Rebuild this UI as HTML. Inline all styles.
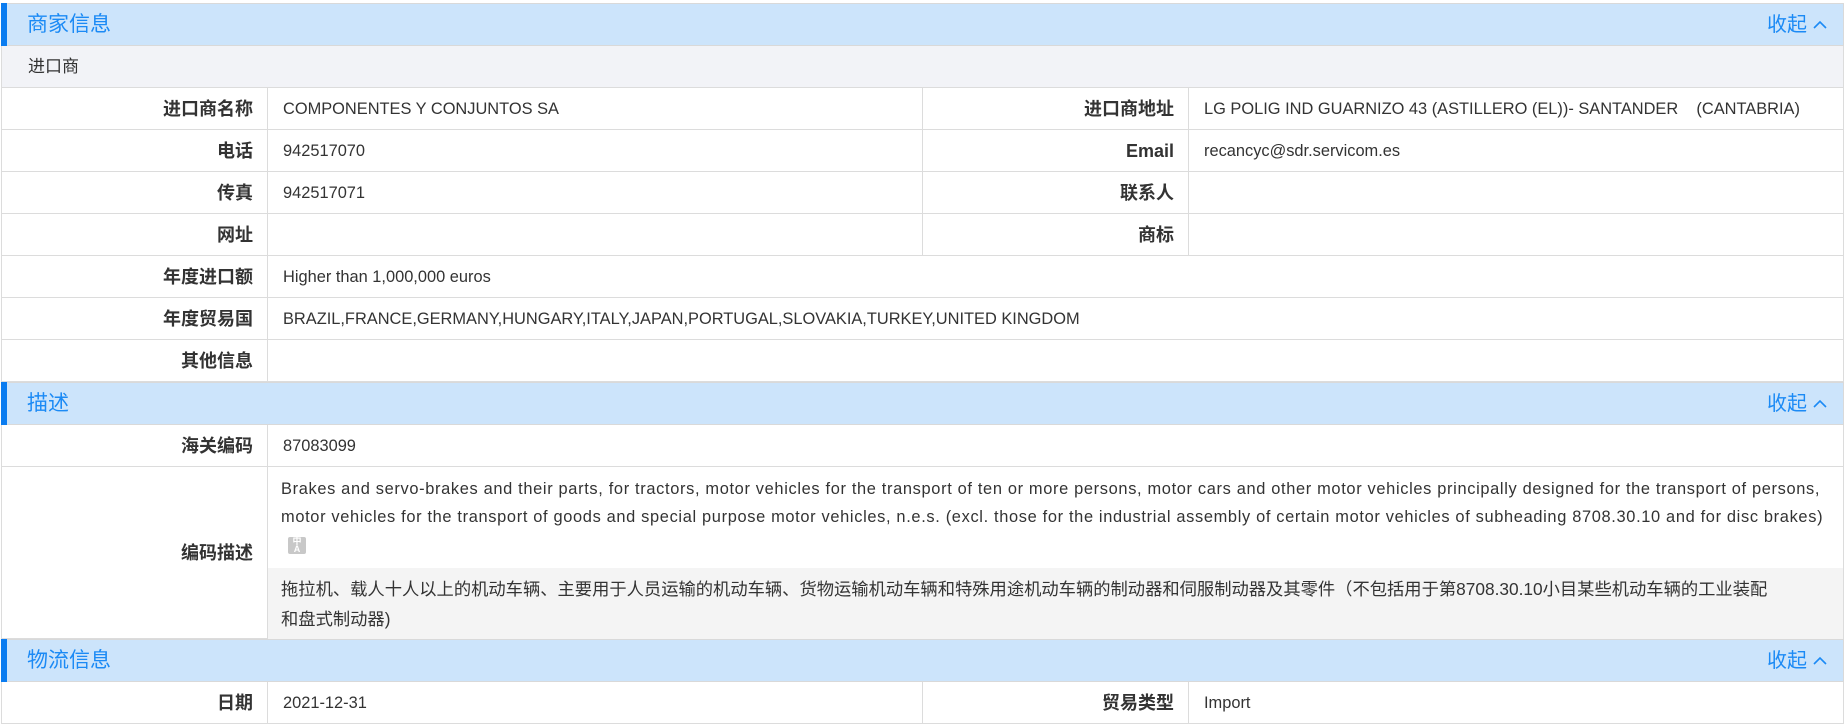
<!DOCTYPE html>
<html><head><meta charset="utf-8"><style>
*{box-sizing:border-box;margin:0;padding:0}
body{width:1846px;height:726px;background:#fff;font-family:"Liberation Sans","Noto Sans CJK SC",sans-serif;color:#333;font-size:16.4px;line-height:20px;overflow:hidden}
.wrap{position:absolute;left:1px;top:3px;width:1843px}
.hd{height:43px;background:#cce4fb;border:1px solid #d9d9d9;border-left:none;position:relative;display:flex;align-items:center;justify-content:space-between;padding:0 16px 0 26px;color:#1b8af5;font-size:21px;line-height:24px}
.hd .c{font-size:20px}
.hd:before{content:"";position:absolute;left:0;top:-1px;bottom:-1px;width:6px;background:#0a7cf0}
.hd .c{display:flex;align-items:center;gap:6px}
.sub{height:42px;background:#f2f3f7;border:1px solid #dcdcdc;border-top:none;display:flex;align-items:center;padding-left:26px;font-size:17px}
.row{display:flex;height:42px;border:1px solid #dcdcdc;border-top:none}
.l{width:266px;text-align:right;padding-right:14px;font-weight:bold;font-size:18px;display:flex;align-items:center;justify-content:flex-end;border-right:1px solid #dcdcdc;flex:none}
.v{display:flex;align-items:center;padding-left:15px;flex:none}
.v1{width:655px;border-right:1px solid #dcdcdc}
.l2{width:266px}
.vf{flex:1;display:flex;align-items:center;padding-left:15px}
.desc{display:flex;height:172px;border:1px solid #dcdcdc;border-top:none}
.desc .l{height:100%}
.dv{flex:1}
.en{padding:8px 0 0 13px;line-height:28px;white-space:nowrap;letter-spacing:0.66px}
.ic{display:inline-block;width:18px;height:17px;background:#c8c8c8;border-radius:2px;margin:6px 0 0 7px;font-size:9px;color:#fff;line-height:8px;text-align:center;font-weight:bold;vertical-align:top;letter-spacing:0}
.cn{background:#f4f4f4;margin-top:9px;height:74px;padding:6px 0 0 13px;line-height:30px;font-size:17.3px;white-space:nowrap}
</style></head><body><div class="wrap">
<div class="hd"><span>商家信息</span><span class="c">收起 <svg width="14" height="10" viewBox="0 0 14 10"><path d="M1 8 L7 2 L13 8" stroke="#1b8af5" stroke-width="1.6" fill="none"/></svg></span></div>
<div class="sub">进口商</div>
<div class="row"><div class="l">进口商名称</div><div class="v v1">COMPONENTES Y CONJUNTOS SA</div><div class="l l2">进口商地址</div><div class="vf">LG POLIG IND GUARNIZO 43 (ASTILLERO (EL))- SANTANDER &nbsp;&nbsp;&nbsp;(CANTABRIA)</div></div>
<div class="row"><div class="l">电话</div><div class="v v1">942517070</div><div class="l l2">Email</div><div class="vf">recancyc@sdr.servicom.es</div></div>
<div class="row"><div class="l">传真</div><div class="v v1">942517071</div><div class="l l2">联系人</div><div class="vf"></div></div>
<div class="row"><div class="l">网址</div><div class="v v1"></div><div class="l l2">商标</div><div class="vf"></div></div>
<div class="row"><div class="l">年度进口额</div><div class="vf">Higher than 1,000,000 euros</div></div>
<div class="row"><div class="l">年度贸易国</div><div class="vf">BRAZIL,FRANCE,GERMANY,HUNGARY,ITALY,JAPAN,PORTUGAL,SLOVAKIA,TURKEY,UNITED KINGDOM</div></div>
<div class="row"><div class="l">其他信息</div><div class="vf"></div></div>
<div class="hd"><span>描述</span><span class="c">收起 <svg width="14" height="10" viewBox="0 0 14 10"><path d="M1 8 L7 2 L13 8" stroke="#1b8af5" stroke-width="1.6" fill="none"/></svg></span></div>
<div class="row"><div class="l">海关编码</div><div class="vf">87083099</div></div>
<div class="desc"><div class="l">编码描述</div><div class="dv"><div class="en">Brakes and servo-brakes and their parts, for tractors, motor vehicles for the transport of ten or more persons, motor cars and other motor vehicles principally designed for the transport of persons,<br>motor vehicles for the transport of goods and special purpose motor vehicles, n.e.s. (excl. those for the industrial assembly of certain motor vehicles of subheading 8708.30.10 and for disc brakes)<br><span class="ic">中<br>A</span></div><div class="cn">拖拉机、载人十人以上的机动车辆、主要用于人员运输的机动车辆、货物运输机动车辆和特殊用途机动车辆的制动器和伺服制动器及其零件（不包括用于第8708.30.10小目某些机动车辆的工业装配<br>和盘式制动器)</div></div></div>
<div class="hd"><span>物流信息</span><span class="c">收起 <svg width="14" height="10" viewBox="0 0 14 10"><path d="M1 8 L7 2 L13 8" stroke="#1b8af5" stroke-width="1.6" fill="none"/></svg></span></div>
<div class="row"><div class="l">日期</div><div class="v v1">2021-12-31</div><div class="l l2">贸易类型</div><div class="vf">Import</div></div>
</div></body></html>
